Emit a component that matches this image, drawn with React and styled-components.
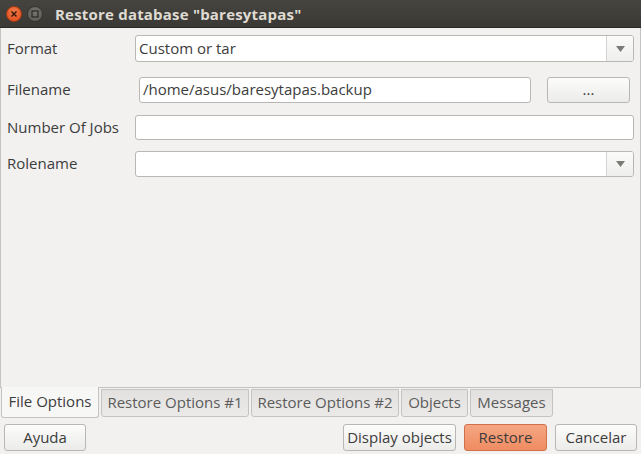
import React from 'react';
import styled, { createGlobalStyle } from 'styled-components';

const Global = createGlobalStyle`
    html, body {
        margin: 0;
        padding: 0;
        background: #f2f1f0;
        font-family: 'Open Sans', 'Noto Sans', sans-serif;
        font-size: 15px;
        color: #3c3c3c;
    }
`;

const Window = styled.div`
    width: 641px;
    height: 454px;
    display: flex;
    flex-direction: column;
    background: #f2f1f0;
    overflow: hidden;
`;

const TitleBar = styled.div`
    height: 28px;
    flex: none;
    display: flex;
    align-items: center;
    padding-left: 6px;
    gap: 5px;
    background: linear-gradient(#45443f, #3a3935);
    border-bottom: 1px solid #2b2a27;
    box-sizing: border-box;
`;

const WinButton = styled.div`
    width: 16px;
    height: 16px;
    border-radius: 50%;
    display: flex;
    align-items: center;
    justify-content: center;
    background: ${(p) => (p.close ? 'radial-gradient(circle at 50% 35%, #f27a4b, #df4a16)' : 'radial-gradient(circle at 50% 35%, #75746f, #5a5954)')};
    border: 1px solid ${(p) => (p.close ? '#a63a10' : '#36352f')};
    box-sizing: border-box;
`;

const Title = styled.div`
    margin-left: 7px;
    font-weight: bold;
    font-size: 15px;
    color: #dfdbd2;
    letter-spacing: 0.2px;
`;

const Page = styled.div`
    flex: none;
    height: 360px;
    border: 1px solid #c4c3bf;
    border-top: none;
    box-sizing: border-box;
    display: flex;
    flex-direction: column;
    padding-top: 6px;
`;

const Row = styled.div`
    display: flex;
    align-items: center;
    height: ${(p) => p.h}px;
    margin-top: ${(p) => p.mt || 0}px;
    padding-left: 6px;
    padding-right: ${(p) => p.pr || 6}px;
`;

const Label = styled.div`
    width: 128px;
    flex: none;
    padding-bottom: 2px;
`;

const Field = styled.div`
    flex: 1;
    height: 100%;
    box-sizing: border-box;
    border: 1px solid #b8b7b3;
    border-radius: 3px;
    background: #fff;
    display: flex;
    align-items: center;
    margin-left: ${(p) => p.ml || 0}px;
    padding-left: 3px;
    overflow: hidden;
`;

const FieldText = styled.div`
    flex: 1;
    color: #3c3c3c;
    padding-bottom: 2px;
`;

const Arrow = styled.div`
    width: 26px;
    height: 100%;
    border-left: 1px solid #d4d3cf;
    background: linear-gradient(#fbfbfa, #eeeeec);
    display: flex;
    align-items: center;
    justify-content: center;
`;

const Button = styled.div`
    height: ${(p) => p.h || 27}px;
    width: ${(p) => p.w}px;
    box-sizing: border-box;
    border: 1px solid ${(p) => (p.primary ? '#d0714a' : '#b8b7b3')};
    border-radius: 3px;
    background: ${(p) => (p.primary ? 'linear-gradient(#f5a683, #ef8c62)' : 'linear-gradient(#fcfcfb, #ebebea)')};
    display: flex;
    align-items: center;
    justify-content: center;
    margin-left: ${(p) => p.ml || 0}px;
    padding-bottom: 2px;
    color: #3c3c3c;
    flex: none;
    white-space: nowrap;
`;

const TabStrip = styled.div`
    display: flex;
    height: 31px;
    flex: none;
    padding-left: 1px;
    align-items: flex-start;
`;

const Tab = styled.div`
    height: ${(p) => (p.active ? 31 : 28)}px;
    margin-top: ${(p) => (p.active ? -1 : 1)}px;
    width: ${(p) => p.w}px;
    box-sizing: border-box;
    margin-right: 2px;
    border: 1px solid #c4c3bf;
    border-top: ${(p) => (p.active ? 'none' : '1px solid #c4c3bf')};
    border-radius: 0 0 3px 3px;
    background: ${(p) => (p.active ? '#f7f7f6' : 'linear-gradient(#e2e1df, #ebeae8)')};
    color: ${(p) => (p.active ? '#3c3c3c' : '#5b5b5b')};
    display: flex;
    align-items: center;
    justify-content: center;
    padding-bottom: 2px;
    white-space: nowrap;
`;

const Actions = styled.div`
    display: flex;
    padding: 5px 4px 0 4px;
    align-items: center;
`;

const Spacer = styled.div`
    flex: 1;
`;

const Caret = () => (
    <svg width="9" height="6" viewBox="0 0 9 6">
        <path d="M0 0 L9 0 L4.5 6 Z" fill="#7a7a77" />
    </svg>
);

export default function App() {
    return (
        <Window>
            <Global />
            <TitleBar>
                <WinButton close>
                    <svg width="8" height="8" viewBox="0 0 8 8">
                        <path d="M1.5 1.5 L6.5 6.5 M6.5 1.5 L1.5 6.5" stroke="#3a1a0c" strokeWidth="1.5" />
                    </svg>
                </WinButton>
                <WinButton>
                    <svg width="8" height="8" viewBox="0 0 8 8">
                        <rect x="1" y="1" width="6" height="6" fill="none" stroke="#2e2d29" strokeWidth="1.3" />
                    </svg>
                </WinButton>
                <Title>Restore database "baresytapas"</Title>
            </TitleBar>
            <Page>
                <Row h={27} mt={1}>
                    <Label>Format</Label>
                    <Field>
                        <FieldText>Custom or tar</FieldText>
                        <Arrow><Caret /></Arrow>
                    </Field>
                </Row>
                <Row h={26} mt={15} pr={10}>
                    <Label>Filename</Label>
                    <Field ml={4}>
                        <FieldText>/home/asus/baresytapas.backup</FieldText>
                    </Field>
                    <Button w={83} h={26} ml={16}>...</Button>
                </Row>
                <Row h={25} mt={12} pr={6}>
                    <Label>Number Of Jobs</Label>
                    <Field />
                </Row>
                <Row h={26} mt={11}>
                    <Label>Rolename</Label>
                    <Field>
                        <FieldText />
                        <Arrow><Caret /></Arrow>
                    </Field>
                </Row>
            </Page>
            <TabStrip>
                <Tab active w={98}>File Options</Tab>
                <Tab w={148}>Restore Options #1</Tab>
                <Tab w={148}>Restore Options #2</Tab>
                <Tab w={67}>Objects</Tab>
                <Tab w={83}>Messages</Tab>
            </TabStrip>
            <Actions>
                <Button w={82}>Ayuda</Button>
                <Spacer />
                <Button w={113}>Display objects</Button>
                <Button w={83} ml={8} primary>Restore</Button>
                <Button w={82} ml={8}>Cancelar</Button>
            </Actions>
        </Window>
    );
}
